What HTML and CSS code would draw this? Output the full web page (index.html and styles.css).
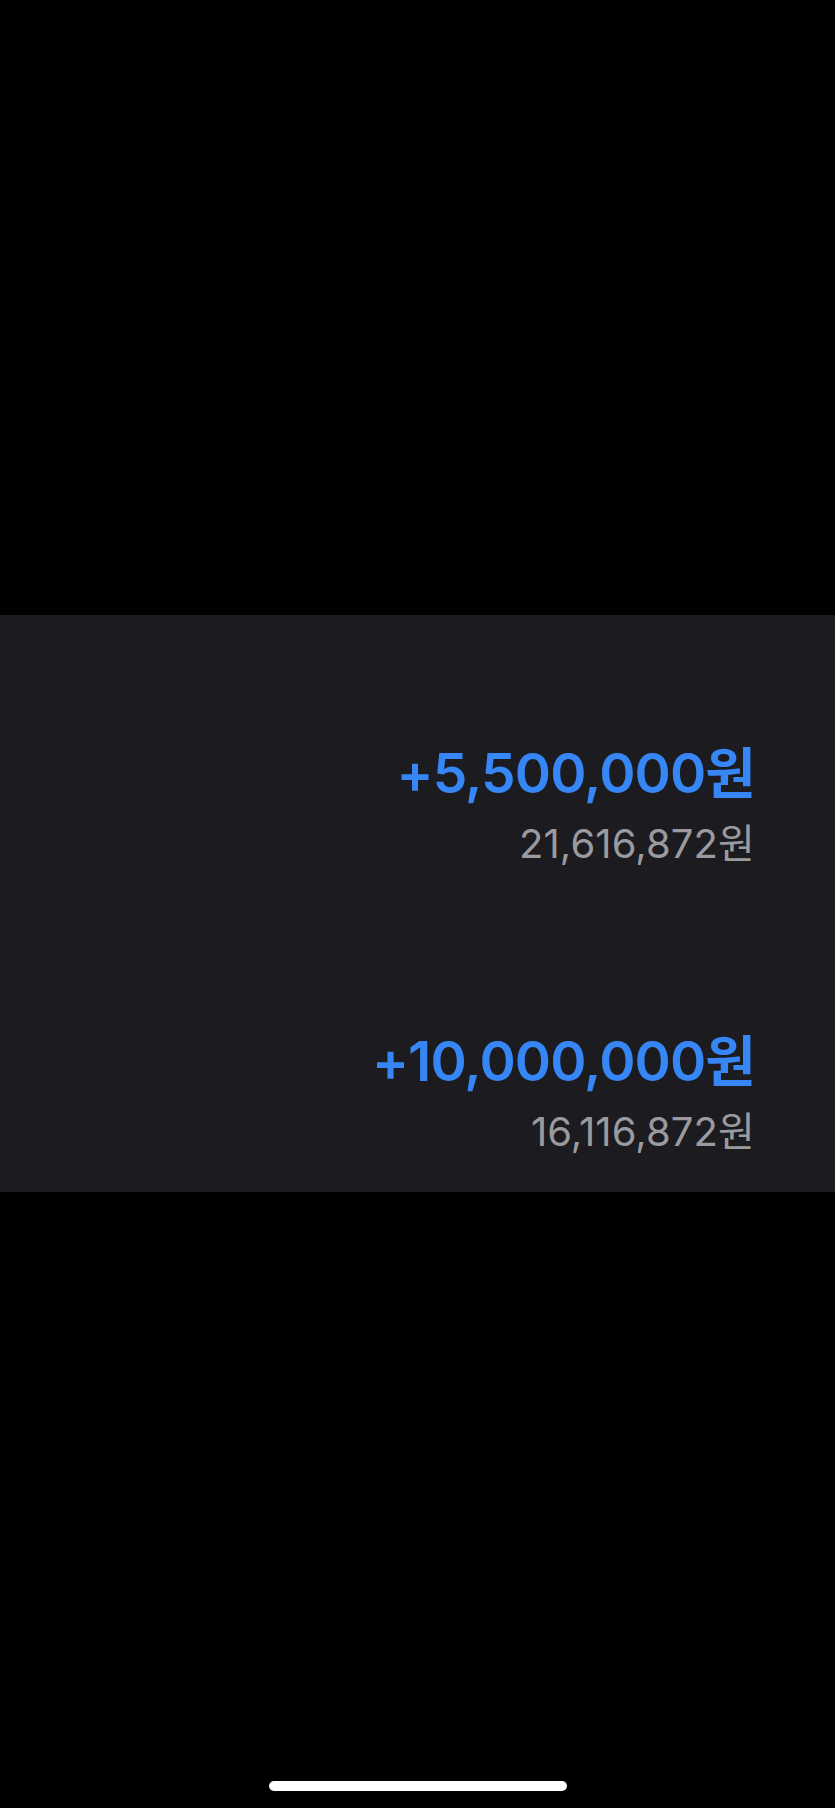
FILE: index.html
```html
<!DOCTYPE html>
<html lang="ko">
<head>
<meta charset="utf-8">
<title>입금 내역</title>
<link rel="stylesheet" href="styles.css">
</head>
<body>
	<div class="screen">
		<div class="history">
			<div class="entry">
				<div class="amount">+5,500,000원</div>
				<div class="balance">21,616,872원</div>
			</div>
			<div class="entry">
				<div class="amount">+10,000,000원</div>
				<div class="balance">16,116,872원</div>
			</div>
		</div>
		<div class="home-bar"></div>
	</div>
</body>
</html>
```

FILE: styles.css
```css
body {
	margin: 0;
	background: #000;
	font-family: Inter, "Noto Sans CJK KR", sans-serif;
}

.screen {
	height: 1808px;
	display: flex;
	flex-direction: column;
	padding-top: 615px;
	box-sizing: border-box;
}

.history {
	background-color: #1b1b20;
	height: 577px;
	box-sizing: border-box;
	padding: 125px 80px 0 0;
	display: flex;
	flex-direction: column;
	align-items: flex-end;
	gap: 160px;
}

.entry {
	display: flex;
	flex-direction: column;
	align-items: flex-end;
	gap: 14px;
}

.amount {
	color: #3686f5;
	font-size: 55px;
	line-height: 66px;
	font-weight: 600;
	letter-spacing: -0.9px;
}

.balance {
	color: #9a9a9f;
	font-size: 40px;
	line-height: 48px;
	letter-spacing: 0.1px;
}

.home-bar {
	margin: auto auto 17px;
	width: 298px;
	height: 10px;
	border-radius: 5px;
	background: #fff;
}
```
